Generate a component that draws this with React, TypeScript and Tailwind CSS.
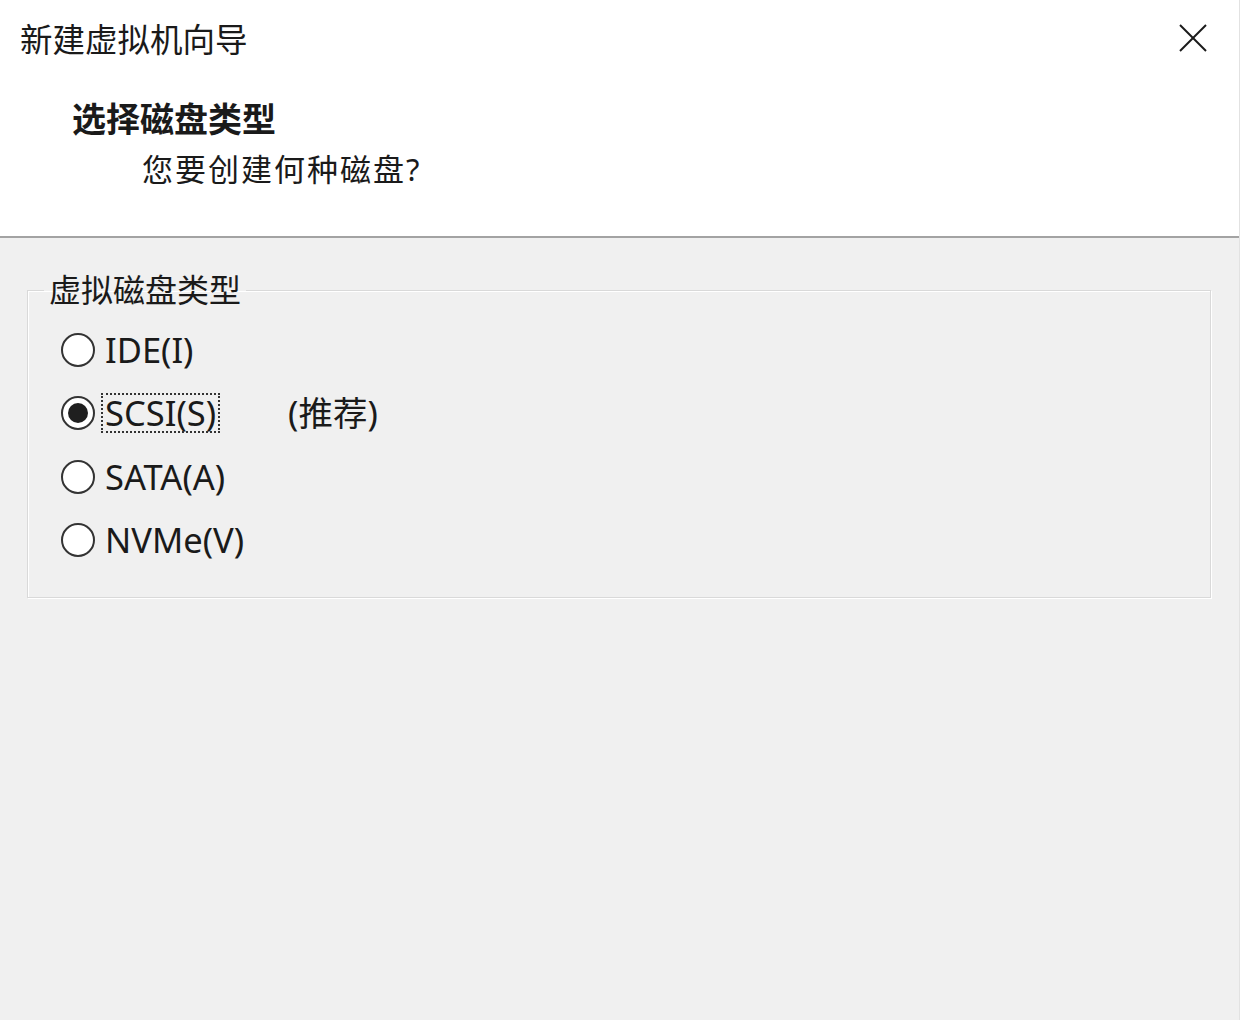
const font = { fontFamily: '"Noto Sans", "Noto Sans CJK SC", sans-serif' }

const options = [
  { id: 'ide', label: 'IDE(I)' },
  { id: 'scsi', label: 'SCSI(S)', note: '(推荐)' },
  { id: 'sata', label: 'SATA(A)' },
  { id: 'nvme', label: 'NVMe(V)' },
]

function Radio({ checked }: { checked: boolean }) {
  return (
    <span className="w-[34px] h-[34px] rounded-full border-2 border-[#333333] bg-white flex items-center justify-center shrink-0">
      {checked && <span className="w-[20px] h-[20px] rounded-full bg-[#1f1f1f]" />}
    </span>
  )
}

export default function App() {
  const selected = 'scsi'

  return (
    <div className="w-[1240px] h-[1020px] flex flex-col bg-[#f0f0f0] text-[#1a1a1a] overflow-hidden border-r border-[#e2e2e2]" style={font}>
      {/* header */}
      <div className="h-[238px] shrink-0 bg-white border-b-2 border-[#a3a3a3] flex flex-col">
        <div className="flex items-start justify-between pl-[20px] pr-[32px] pt-[20px]">
          <span className="text-[32.5px] leading-[40px]">新建虚拟机向导</span>
          <svg className="mt-[4px]" width="28" height="28" viewBox="0 0 28 28" fill="none" stroke="#1a1a1a" strokeWidth="2">
            <line x1="1" y1="1" x2="27" y2="27" />
            <line x1="27" y1="1" x2="1" y2="27" />
          </svg>
        </div>
        <div className="pl-[72px] mt-[39px] text-[34px] leading-[40px] font-bold">选择磁盘类型</div>
        <div className="pl-[142px] mt-[10px] text-[31px] leading-[40px] tracking-[2px]">您要创建何种磁盘?</div>
      </div>

      {/* body */}
      <fieldset className="mt-[33px] ml-[27px] mr-[28px] border border-[#d9d9d9] shadow-[inset_1px_1px_0_#ffffff,1px_1px_0_#ffffff] px-0 pt-[9px] pb-[25px]">
        <legend className="ml-[16px] px-[5px] text-[32px] leading-[38px]">虚拟磁盘类型</legend>
        <div className="flex flex-col pl-[33px]">
          {options.map(o => (
            <div key={o.id} className="h-[63.5px] flex items-center">
              <Radio checked={o.id === selected} />
              <span
                className={`ml-[7px] px-[3px] text-[34.5px] leading-[38px] ${o.id === selected ? 'outline-2 outline-dotted outline-[#333333] -outline-offset-1' : ''}`}
              >
                {o.label}
              </span>
              {o.note && <span className="ml-[69px] text-[34.5px] leading-[38px]">{o.note}</span>}
            </div>
          ))}
        </div>
      </fieldset>
    </div>
  )
}
